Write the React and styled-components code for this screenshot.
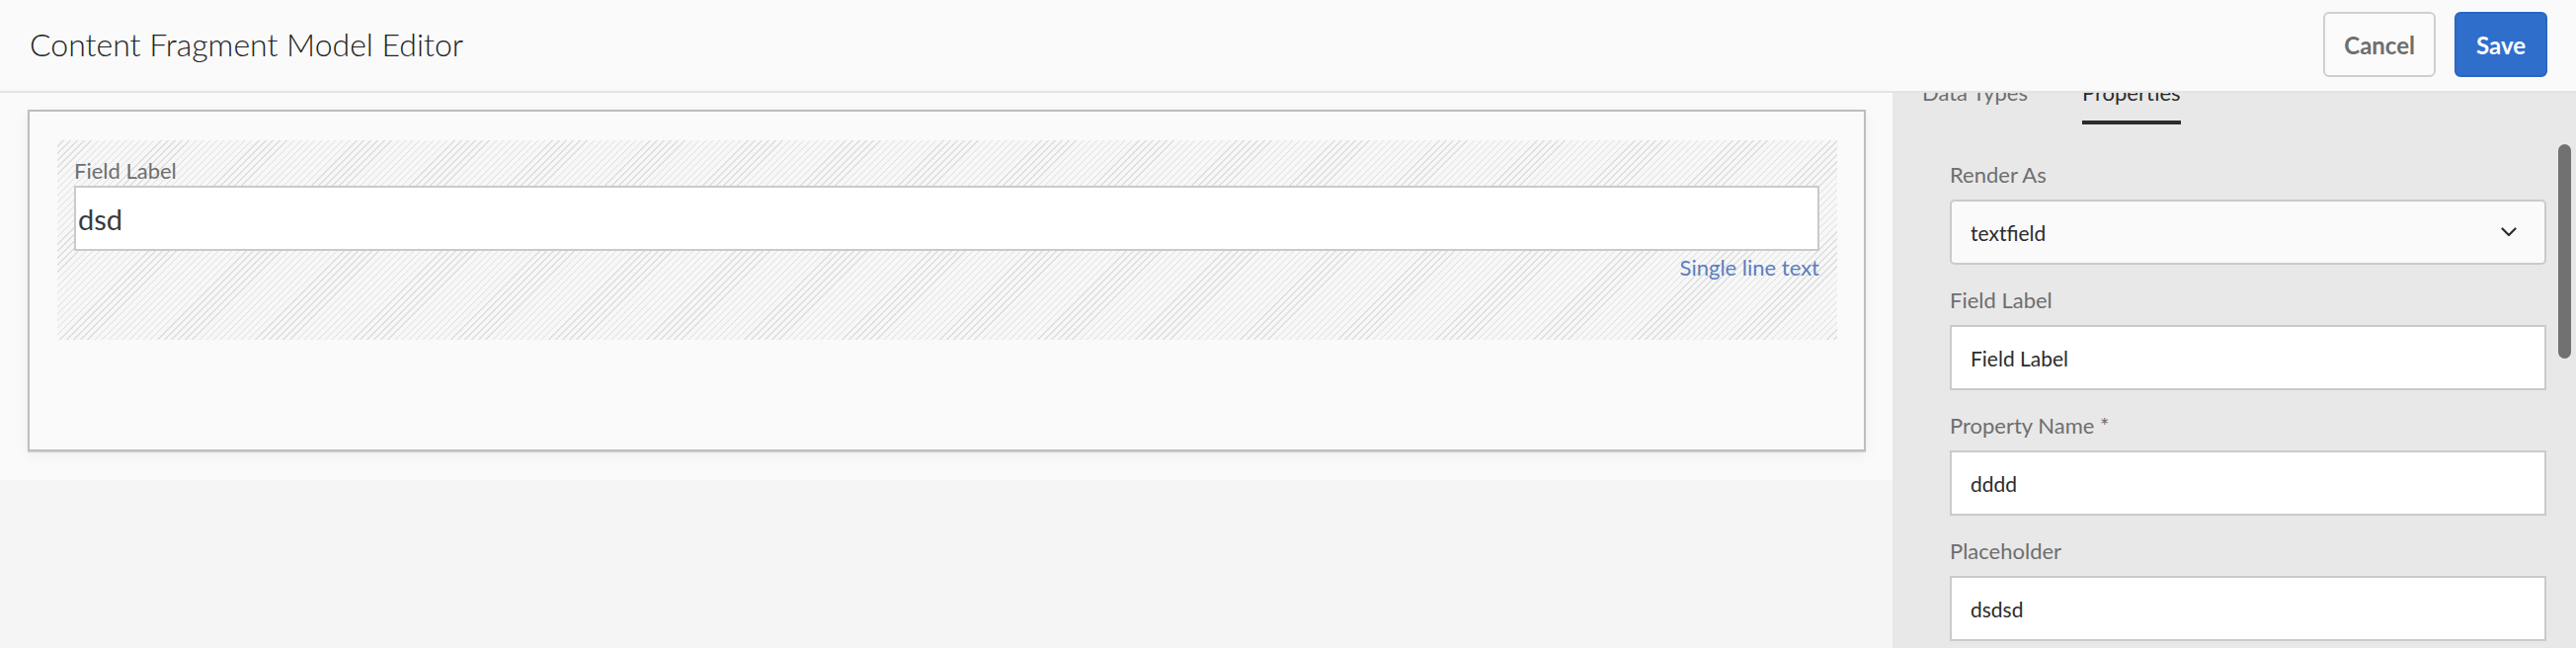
import React from 'react'
import styled, { createGlobalStyle } from 'styled-components'

const GlobalStyle = createGlobalStyle`
  html, body {
    margin: 0;
    padding: 0;
    background: #f5f5f5;
    font-family: Lato, "Open Sans", sans-serif;
  }
  * {
    box-sizing: border-box;
  }
`

const Page = styled.div`
  width: 2608px;
  height: 656px;
  display: flex;
  flex-direction: column;
  overflow: hidden;
`

const Header = styled.header`
  height: 94px;
  flex: 0 0 94px;
  display: flex;
  align-items: center;
  justify-content: space-between;
  padding: 0 29px 2px 30px;
  background: #fafafa;
  border-bottom: 2px solid #e3e3e3;
  position: relative;
  z-index: 2;
`

const Title = styled.h1`
  margin: 0;
  font-size: 32px;
  font-weight: 300;
  line-height: 1.2;
  color: #222222;
`

const Actions = styled.div`
  display: flex;
  gap: 19px;
`

const Button = styled.button`
  height: 66px;
  padding: 0 ${({ $primary }) => ($primary ? '20px' : '19px')};
  border-radius: 6px;
  font-family: Lato, sans-serif;
  font-size: 24px;
  font-weight: 700;
  border: 2px solid ${({ $primary }) => ($primary ? '#2a66bf' : '#cfcfcf')};
  background: ${({ $primary }) => ($primary ? '#2f6fcb' : '#fbfbfb')};
  color: ${({ $primary }) => ($primary ? '#ffffff' : '#6e6e6e')};
`

const Body = styled.div`
  flex: 1;
  display: flex;
  min-height: 0;
`

const Canvas = styled.main`
  flex: 0 0 1916px;
  display: flex;
  flex-direction: column;
  background: #f5f5f5;
`

const CanvasTop = styled.div`
  background: #fafafa;
  padding: 17px 27px 29px 28px;
`

const Card = styled.section`
  background: #fafafa;
  border: 2px solid #bdbdbd;
  box-shadow: 0 1px 1px rgba(0, 0, 0, 0.12), 0 4px 14px rgba(0, 0, 0, 0.05);
  padding: 29px 27px 111px 28px;
`

const DropZone = styled.div`
  padding: 18px 18px 60px 17px;
  background-color: #f7f7f7;
  background-image: repeating-linear-gradient(
    135deg,
    transparent 0,
    transparent 4px,
    #dedede 4px,
    #dedede 5px
  );
  display: flex;
  flex-direction: column;
`

const FieldLabel = styled.label`
  display: block;
  font-size: 22px;
  line-height: 26px;
  color: #6e6e6e;
  margin-bottom: ${({ $gap }) => $gap || 0}px;
`

const PreviewInput = styled.div`
  height: 66px;
  display: flex;
  align-items: center;
  padding: 0 2px;
  background: #ffffff;
  border: 2px solid #cacaca;
  font-size: 29px;
  color: #3a3a3a;
`

const TypeHint = styled.div`
  align-self: flex-end;
  margin-top: 4px;
  font-size: 22px;
  line-height: 26px;
  color: #5a7fbf;
`

const Panel = styled.aside`
  flex: 1;
  position: relative;
  overflow: hidden;
  background: #e8e8e8;
`

const Tabs = styled.nav`
  display: flex;
  gap: 55px;
  margin-top: -13px;
  padding-left: 30px;
`

const Tab = styled.div`
  font-size: 22px;
  line-height: 26px;
  padding-bottom: 15px;
  color: ${({ $active }) => ($active ? '#2c2c2c' : '#6e6e6e')};
  border-bottom: 4px solid ${({ $active }) => ($active ? '#2c2c2c' : 'transparent')};
`

const Form = styled.div`
  padding: 38px 30px 0 58px;
`

const Group = styled.div`
  margin-bottom: 23px;
`

const TextInput = styled.div`
  height: 66px;
  display: flex;
  align-items: center;
  padding: 0 19px;
  background: #ffffff;
  border: 2px solid #cacaca;
  font-size: 21px;
  color: #2c2c2c;
`

const Select = styled(TextInput)`
  justify-content: space-between;
  background: #fafafa;
  border-radius: 5px;
  padding-right: 28px;
`

const ScrollThumb = styled.div`
  position: absolute;
  right: 5px;
  top: 52px;
  width: 13px;
  height: 217px;
  border-radius: 7px;
  background: #717171;
`

const Chevron = () => (
  <svg width="16" height="10" viewBox="0 0 16 10" fill="none">
    <path d="M1.5 1.5 L8 8 L14.5 1.5" stroke="#2c2c2c" strokeWidth="2.2" strokeLinecap="round" strokeLinejoin="round" />
  </svg>
)

const App = () => {
  const fields = [
    { label: 'Field Label', value: 'Field Label' },
    { label: 'Property Name *', value: 'dddd' },
    { label: 'Placeholder', value: 'dsdsd' },
  ]

  return (
    <Page>
      <GlobalStyle />
      <Header>
        <Title>Content Fragment Model Editor</Title>
        <Actions>
          <Button>Cancel</Button>
          <Button $primary>Save</Button>
        </Actions>
      </Header>
      <Body>
        <Canvas>
          <CanvasTop>
            <Card>
              <DropZone>
                <FieldLabel $gap={2}>Field Label</FieldLabel>
                <PreviewInput>dsd</PreviewInput>
                <TypeHint>Single line text</TypeHint>
              </DropZone>
            </Card>
          </CanvasTop>
        </Canvas>
        <Panel>
          <Tabs>
            <Tab>Data Types</Tab>
            <Tab $active>Properties</Tab>
          </Tabs>
          <Form>
            <Group>
              <FieldLabel $gap={12}>Render As</FieldLabel>
              <Select>
                textfield
                <Chevron />
              </Select>
            </Group>
            {fields.map((f) => (
              <Group key={f.label}>
                <FieldLabel $gap={12}>{f.label}</FieldLabel>
                <TextInput>{f.value}</TextInput>
              </Group>
            ))}
          </Form>
          <ScrollThumb />
        </Panel>
      </Body>
    </Page>
  )
}

export default App
